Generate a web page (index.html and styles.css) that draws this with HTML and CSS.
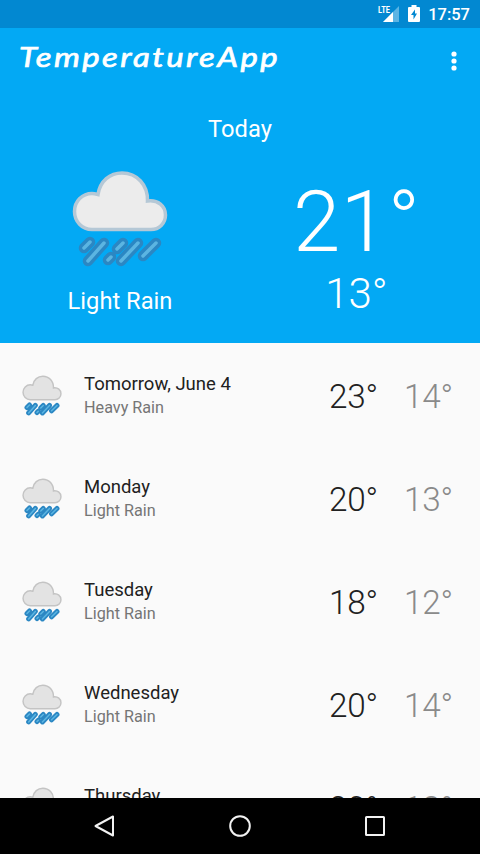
FILE: index.html
```html
<!DOCTYPE html>
<html lang="en">
<head>
<meta charset="utf-8">
<title>TemperatureApp</title>
<link rel="stylesheet" href="styles.css">
</head>
<body>
<svg class="defs" aria-hidden="true">
  <symbol id="rain" viewBox="0 0 96 98">
    <path class="cloud" d="M20 60.500C10 60.500 2.500 52.500 2.500 42.500C2.500 32 10.500 24.500 20 24.500C22 24.500 24 25 26 25.500C28 12 38 4 50 4C65 4 76 16 75.500 32C86 30.500 93.500 37 93.500 46C93.500 54.500 87 60.500 79 60.500Z"/>
    <path class="drop-edge" d="M12 79l6-6M16 92l16-18M36 91l3-3M45 80l6-6M49 92l17-18M71 87l13-13"/>
    <path class="drop-core" d="M12 79l6-6M16 92l16-18M36 91l3-3M45 80l6-6M49 92l17-18M71 87l13-13"/>
  </symbol>
</svg>
<div class="phone">
  <header class="status">
    <svg class="signal" width="21" height="18" viewBox="0 0 21 18">
      <path class="signal-bg" d="M20 1V17H4Z"/>
      <path class="signal-on" d="M14 7V17H4Z"/>
      <text x="-1" y="8" textLength="12" lengthAdjust="spacingAndGlyphs">LTE</text>
    </svg>
    <svg class="battery" width="12" height="18" viewBox="0 0 12 18">
      <path class="battery-body" d="M3.500 0h5v2H11q1 0 1 1v13q0 1-1 1H1q-1 0-1-1V3q0-1 1-1h2.500z"/>
      <path class="bolt" d="M7 4.500L3 10h2.500v4.500L9 8.500H7z"/>
    </svg>
    <span class="clock">17:57</span>
  </header>
  <section class="hero">
    <div class="toolbar">
      <svg class="brand" width="270" height="44" viewBox="0 0 270 44"><text x="0" y="29" textLength="261" lengthAdjust="spacingAndGlyphs">TemperatureApp</text></svg>
      <svg class="more" width="6" height="20" viewBox="0 0 6 20"><circle cx="3" cy="3" r="2.600"/><circle cx="3" cy="10" r="2.600"/><circle cx="3" cy="17" r="2.600"/></svg>
    </div>
    <div class="today">Today</div>
    <div class="current">
      <div class="summary">
        <svg class="icon-big"><use href="#rain"/></svg>
        <div class="condition">Light Rain</div>
      </div>
      <div class="temps">
        <div class="high-big">21°</div>
        <div class="low-big">13°</div>
      </div>
    </div>
  </section>
  <main class="list">
    <div class="row"><svg class="icon"><use href="#rain"/></svg><div class="info"><div class="day">Tomorrow, June 4</div><div class="desc">Heavy Rain</div></div><div class="high">23°</div><div class="low">14°</div></div>
    <div class="row"><svg class="icon"><use href="#rain"/></svg><div class="info"><div class="day">Monday</div><div class="desc">Light Rain</div></div><div class="high">20°</div><div class="low">13°</div></div>
    <div class="row"><svg class="icon"><use href="#rain"/></svg><div class="info"><div class="day">Tuesday</div><div class="desc">Light Rain</div></div><div class="high">18°</div><div class="low">12°</div></div>
    <div class="row"><svg class="icon"><use href="#rain"/></svg><div class="info"><div class="day">Wednesday</div><div class="desc">Light Rain</div></div><div class="high">20°</div><div class="low">14°</div></div>
    <div class="row"><svg class="icon"><use href="#rain"/></svg><div class="info"><div class="day">Thursday</div></div><div class="high">20°</div><div class="low">13°</div></div>
  </main>
  <nav class="nav">
    <svg width="24" height="24" viewBox="0 0 24 24"><path d="M20 2.500V21.500L2.500 12Z"/></svg>
    <svg width="24" height="24" viewBox="0 0 24 24"><circle cx="12" cy="12" r="9.800"/></svg>
    <svg width="24" height="24" viewBox="0 0 24 24"><rect x="3" y="3" width="18" height="18" rx=".5"/></svg>
  </nav>
</div>
</body>
</html>
```
FILE: styles.css
```css
* { box-sizing: border-box; }
body { margin: 0; font-family: Roboto, "Liberation Sans", sans-serif; }
.defs { position: absolute; width: 0; height: 0; }
.phone { width: 480px; height: 854px; display: flex; flex-direction: column; overflow: hidden; background: #fafafa; }

.status { flex: none; height: 28px; background: #0288d1; display: flex; align-items: center; justify-content: flex-end; padding-right: 10px; color: #fff; }
.signal { margin-right: 8px; overflow: visible; }
.signal-bg { fill: #5bb4e4; }
.signal-on { fill: #fff; }
.signal text { fill: #fff; font-size: 9px; font-weight: 700; }
.battery { margin-right: 8px; }
.battery-body { fill: #fff; }
.bolt { fill: #0288d1; }
.clock { font-size: 16.5px; font-weight: 500; line-height: 28px; padding-top: 2px; }

.hero { flex: none; height: 315px; background: #03a9f4; color: #fff; }
.toolbar { height: 75px; display: flex; justify-content: space-between; padding: 0 23px 0 19px; }
.brand { margin-top: 10px; overflow: visible; }
.brand text { font: italic 400 27px Lato, sans-serif; letter-spacing: 2px; fill: #fff; stroke: #fff; stroke-width: .7px; }
.more { margin-top: 23px; fill: #fff; }
.today { height: 52px; font-size: 23.7px; line-height: 52px; text-align: center; }
.current { display: grid; grid-template-columns: 240px 240px; }
.summary { display: flex; flex-direction: column; align-items: center; }
.icon-big { width: 96px; height: 98px; margin-top: 14px; }
.condition { margin-top: 17px; font-size: 23.7px; line-height: 34px; }
.temps { text-align: center; font-weight: 300; padding-right: 7px; }
.high-big { margin-top: 19px; font-size: 85.3px; line-height: 96px; }
.low-big { font-size: 42px; line-height: 47px; }

.cloud { fill: var(--cloud-fill, #ececec); stroke: var(--cloud-line, #b5c8d6); stroke-width: 3.500; }
.drop-edge { fill: none; stroke: #2b87c3; stroke-width: var(--drop, 10.5); stroke-linecap: round; }
.drop-core { fill: none; stroke: #5bb5e2; stroke-width: 3.500; stroke-linecap: round; }

.list { flex: 1; min-height: 0; overflow: hidden; }
.row { height: 103px; display: grid; grid-template-columns: 62px 1fr 75px 75px; align-items: start; padding: 0 27px 0 22px; }
.icon { width: 40px; height: 42px; margin-top: 31px; --cloud-fill: #e3e3e3; --cloud-line: #c4c4c4; --drop: 12; }
.info { margin-top: 29px; }
.day { font-size: 18.500px; line-height: 24px; color: #212121; }
.desc { font-size: 16.200px; line-height: 24px; color: #757575; }
.high, .low { margin-top: 33px; font-size: 33.300px; line-height: 42px; font-weight: 300; text-align: right; letter-spacing: -.2px; }
.high { color: #212121; }
.low { color: #8a8a8a; }

.nav { flex: none; height: 56px; background: #000; display: flex; justify-content: center; align-items: center; gap: 111px; }
.nav svg { fill: none; stroke: #f2f2f2; stroke-width: 2; stroke-linejoin: round; }
```
